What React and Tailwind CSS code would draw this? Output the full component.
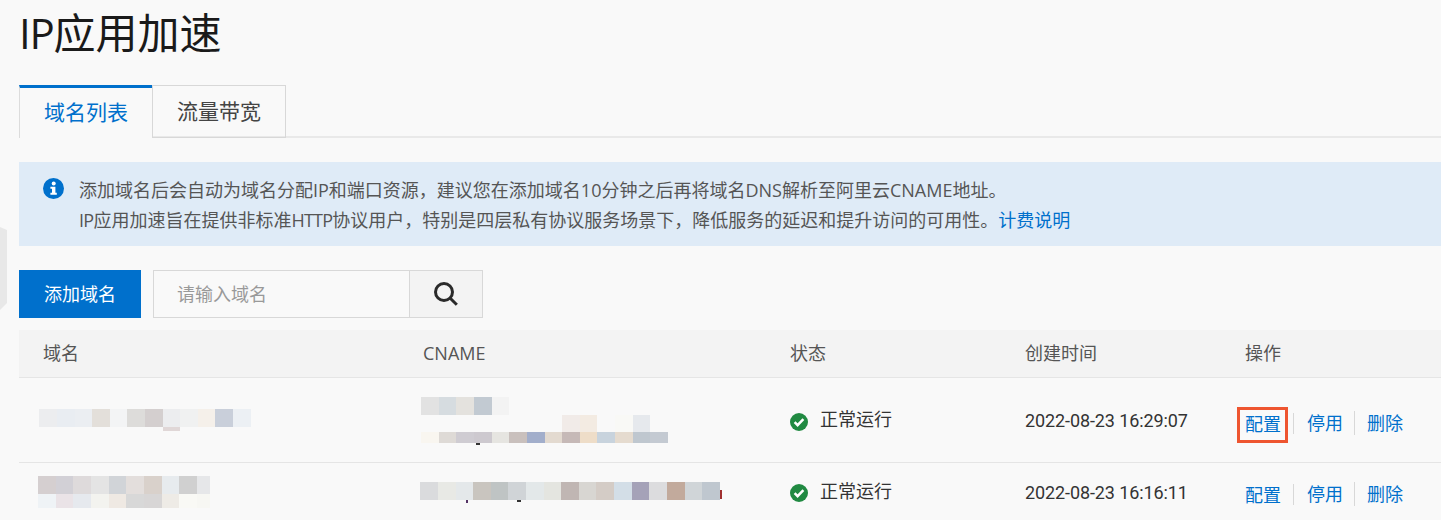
import React from "react";

const FONT = "font-['Open_Sans','Noto_Sans_CJK_SC','Noto_Sans',sans-serif]";
const DATE = "font-['Roboto','Noto_Sans_CJK_SC',sans-serif] tracking-[-0.1px]";

function Mosaic({ colors, w = 18, h = 18, className = "" }) {
  return (
    <div className={"flex " + className}>
      {colors.map((c, i) => (
        <div key={i} style={{ backgroundColor: c, width: Array.isArray(w) ? w[i] : w, height: h }} />
      ))}
    </div>
  );
}

function Ok({ className }) {
  return (
    <svg width="18" height="18" viewBox="0 0 18 18" className={"shrink-0 " + className}>
      <circle cx="9" cy="9" r="9" fill="#218a42" />
      <path d="M4.6 9.2 L7.6 12.2 L13.4 6.2" fill="none" stroke="#fff" strokeWidth="2.5" />
    </svg>
  );
}

function Actions({ boxed }) {
  return (
    <div className="flex items-center text-[18px] leading-[24px] text-[#0070cc]">
      <span className="relative">
        配置
        {boxed && <span className="absolute left-[-8px] right-[-7px] top-[-5px] bottom-[-7px] border-[3px] border-[#ee5530]" />}
      </span>
      <span className="w-px h-[21px] bg-[#d8d8d8] ml-[12px] mr-[13px] -mt-[2px]" />
      <span className="-mt-[2px]">停用</span>
      <span className="w-px h-[24px] bg-[#d8d8d8] ml-[11px] mr-[12px] -mt-[2px]" />
      <span className="-mt-[2px]">删除</span>
    </div>
  );
}

const HEAD = "pl-6 flex items-center";

export default function App() {
  return (
    <div className={"relative w-[1441px] h-[520px] overflow-hidden bg-[#f9f9f9] pl-[19px] text-[#333] " + FONT}>
      <svg width="7" height="83" viewBox="0 0 7 83" className="absolute left-0 top-[227px]">
        <path d="M0 0 L7 3 L7 76 L0 83 Z" fill="#e8e8e8" />
      </svg>

      <h1 className="h-[85px] pt-[5px] text-[42px] leading-[56px] text-[#1a1a1a] font-normal"><span className="tracking-[-1.2px]">IP</span>应用加速</h1>

      <div className="flex h-[53px] border-b-2 border-[#e9e9e9]">
        <div className="w-[133px] h-[53px] border-t-[3px] border-t-[#0070cc] border-l border-l-[#dcdcdc] bg-[#f9f9f9] flex items-center justify-center text-[21px] text-[#0070cc]">域名列表</div>
        <div className="w-[134px] h-[53px] border-[1px] border-[#d8d8d8] flex items-center justify-center text-[21px] text-[#444]">流量带宽</div>
      </div>

      <div className="mt-[24px] h-[84px] bg-[#dfebf7] flex pl-[24px] pt-[13px] text-[18px] leading-[30px] text-[#555]">
        <svg width="21" height="21" viewBox="0 0 21 21" className="mt-[3px] mr-[15px] shrink-0">
          <circle cx="10.5" cy="10.5" r="10.5" fill="#0070cc" />
          <circle cx="10.7" cy="5.6" r="2" fill="#fff" />
          <path d="M7.4 8.8 H12.4 V14.8 H13.8 V16.8 H7.4 V14.8 H9 V10.8 H7.4 Z" fill="#fff" />
        </svg>
        <div>
          <p>添加域名后会自动为域名分配IP和端口资源，建议您在添加域名10分钟之后再将域名DNS解析至阿里云CNAME地址。</p>
          <p><span className="tracking-[-0.7px]">IP</span>应用加速旨在提供非标准<span className="tracking-[-0.8px]">HTTP</span>协议用户，特别是四层私有协议服务场景下，降低服务的延迟和提升访问的可用性。<span className="text-[#0070cc]">计费说明</span></p>
        </div>
      </div>

      <div className="mt-[24px] flex h-[48px]">
        <div className="w-[122px] bg-[#0070cc] text-white text-[18px] flex items-center justify-center">添加域名</div>
        <div className="ml-[12px] w-[257px] border border-[#d8d8d8] pl-[23px] flex items-center text-[18px] text-[#999]">请输入域名</div>
        <div className="w-[73px] border border-l-0 border-[#d8d8d8] bg-[#f3f3f3] flex items-center justify-center">
          <svg width="24" height="24" viewBox="0 0 24 24" fill="none" stroke="#2a2a2a" strokeWidth="3">
            <circle cx="10" cy="10" r="8.5" />
            <path d="M16 16 L22.8 22.8" />
          </svg>
        </div>
      </div>

      <div className="mt-[12px] text-[18px]">
        <div className="grid grid-cols-[380px_367px_235px_220px_1fr] h-[48px] bg-[#f3f3f3] border-b border-[#e5e5e5] text-[#555]">
          <div className={HEAD}>域名</div>
          <div className={HEAD}>CNAME</div>
          <div className={HEAD}>状态</div>
          <div className={HEAD}>创建时间</div>
          <div className={HEAD}>操作</div>
        </div>

        <div className="grid grid-cols-[380px_367px_235px_220px_1fr] h-[85px] border-b border-[#e5e5e5]">
          <div className="pl-[20px] pt-[31px]">
            <Mosaic colors={["#ecedef","#e9edf2","#ebeef2","#e3dfda","#f3f4f5","#dddcda","#d4cfcf","#ecedef","#f0f1f1","#f5f0ea","#c9cfda","#ecf0f4"]} w={[18,18,17,18,17,18,18,17,18,17,18,18]} />
            <Mosaic colors={["#e0d7d7"]} h={4} w={17} className="ml-[124px]" />
          </div>
          <div className="relative pl-[22px] pt-[19px]">
            <Mosaic colors={["#e2e2e2","#d6dce0","#e4e2de","#c2cad2","#f3f3f3"]} w={[18,17,18,18,17]} />
            <Mosaic colors={["#f1ebe8","#f3ebe2","#f9f9f9","#f9f9f6","#e6e9ed"]} w={[18,17,18,18,17]} h={17} className="ml-[141px]" />
            <Mosaic colors={["#f9f6f0","#dedad6","#cfccd2","#cdc9cf","#e6e5e1","#c9c0bd","#a2aecb","#e3dad0","#c6b9b7","#eeddc8","#c8d3dd","#e5dbcf","#bfc7cf","#c4cad2"]} w={[18,17,18,18,17,18,18,17,18,17,18,18,17,18]} h={11} />
            <span className="absolute left-[77px] top-[65px] w-[4px] h-[2px] bg-[#333]" />
          </div>
          <div className="pl-6 flex items-center gap-[12px] h-[84px] pb-[2px]"><Ok className="mt-[5px]" /><span>正常运行</span></div>
          <div className={"pl-6 flex items-center h-[84px] " + DATE}>2022-08-23 16:29:07</div>
          <div className="pl-6 pt-[34px]"><Actions boxed /></div>
        </div>

        <div className="grid grid-cols-[380px_367px_235px_220px_1fr] h-[57px]">
          <div className="pl-[19px] pt-[13px]">
            <Mosaic colors={["#d5cfd0","#d2d0d6","#dedadb","#e4e4e4","#d1d4d8","#e3dedc","#d9d1cb","#e7ebee","#d0d0d0","#e6e7e9"]} w={[18,17,18,18,17,18,18,17,18,13]} />
            <Mosaic colors={["#eff3f6","#eae3e7","#e6e9ee","#f3f3ef","#efe9e3","#d8d8d8","#d8d6d6","#eeebe6","#f9f9f5","#f7f7f3"]} w={[18,17,18,18,17,18,18,17,18,13]} h={14} />
          </div>
          <div className="relative pl-[21px] pt-[19px]">
            <Mosaic colors={["#dadbdd","#e8e9e5","#e4e8ea","#c9c5bf","#bfc4c4","#d0d4d7","#e3e8e9","#e4e5e0","#c0b6b3","#d8d6d2","#d4ccc6","#d3dee7","#a5a2b8","#dcdcde","#c2aa9c","#d0d5d8","#bfc7cf"]} w={[18,18,17,18,17,18,18,17,18,17,18,18,17,18,18,17,18]} />
            <span className="absolute left-[67px] top-[37px] w-[2px] h-[3px] bg-[#553366]" />
            <span className="absolute left-[118px] top-[37px] w-[4px] h-[2px] bg-[#333]" />
            <span className="absolute left-[321px] top-[27px] w-[2px] h-[9px] bg-[#a03030]" />
          </div>
          <div className="pl-6 flex items-center gap-[12px] h-[57px]"><Ok className="mt-[3px]" /><span>正常运行</span></div>
          <div className={"pl-6 flex items-center h-[57px] pt-[2px] " + DATE}>2022-08-23 16:16:11</div>
          <div className="pl-6 pt-[20px]"><Actions /></div>
        </div>
      </div>
    </div>
  );
}
